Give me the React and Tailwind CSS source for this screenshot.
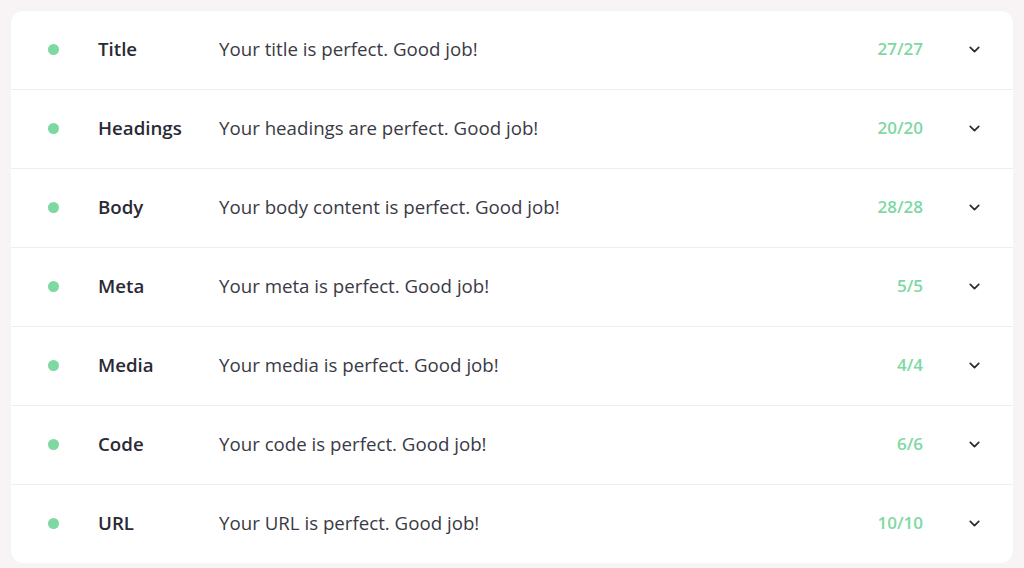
import React from 'react';

const rows = [
  { label: 'Title', message: 'Your title is perfect. Good job!', score: '27/27' },
  { label: 'Headings', message: 'Your headings are perfect. Good job!', score: '20/20' },
  { label: 'Body', message: 'Your body content is perfect. Good job!', score: '28/28' },
  { label: 'Meta', message: 'Your meta is perfect. Good job!', score: '5/5' },
  { label: 'Media', message: 'Your media is perfect. Good job!', score: '4/4' },
  { label: 'Code', message: 'Your code is perfect. Good job!', score: '6/6' },
  { label: 'URL', message: 'Your URL is perfect. Good job!', score: '10/10' },
];

const Chevron = () => (
  <svg width="17" height="17" viewBox="0 0 24 24" fill="none" stroke="#2b2b35" strokeWidth="2.4" strokeLinecap="round" strokeLinejoin="round">
    <path d="M6 9l6 6 6-6" />
  </svg>
);

const App = () => {
  return (
    <div className="min-h-screen bg-[#f8f3f5] p-[11px]" style={{ fontFamily: '"Open Sans", "Noto Sans", sans-serif' }}>
      <div className="w-[1002px] bg-white rounded-xl overflow-hidden">
        {rows.map((row, i) => (
          <div
            key={row.label}
            className={`flex items-center pb-[2px] pl-[37px] pr-[30px] ${i < rows.length - 1 ? 'h-[79px] border-b border-[#f1eef0]' : 'h-[78px]'}`}
          >
            <span className="w-[11px] h-[11px] rounded-full bg-[#7dd8a2] shrink-0" />
            <span className="ml-[39px] w-[121px] text-[18.7px] font-semibold text-[#2a2a35]">{row.label}</span>
            <span className="flex-1 text-[18.7px] text-[#3a3a45]">{row.message}</span>
            <span className="text-[17px] font-semibold text-[#7dd8a2]">{row.score}</span>
            <span className="ml-[43px] flex items-center"><Chevron /></span>
          </div>
        ))}
      </div>
    </div>
  );
};

export default App;
